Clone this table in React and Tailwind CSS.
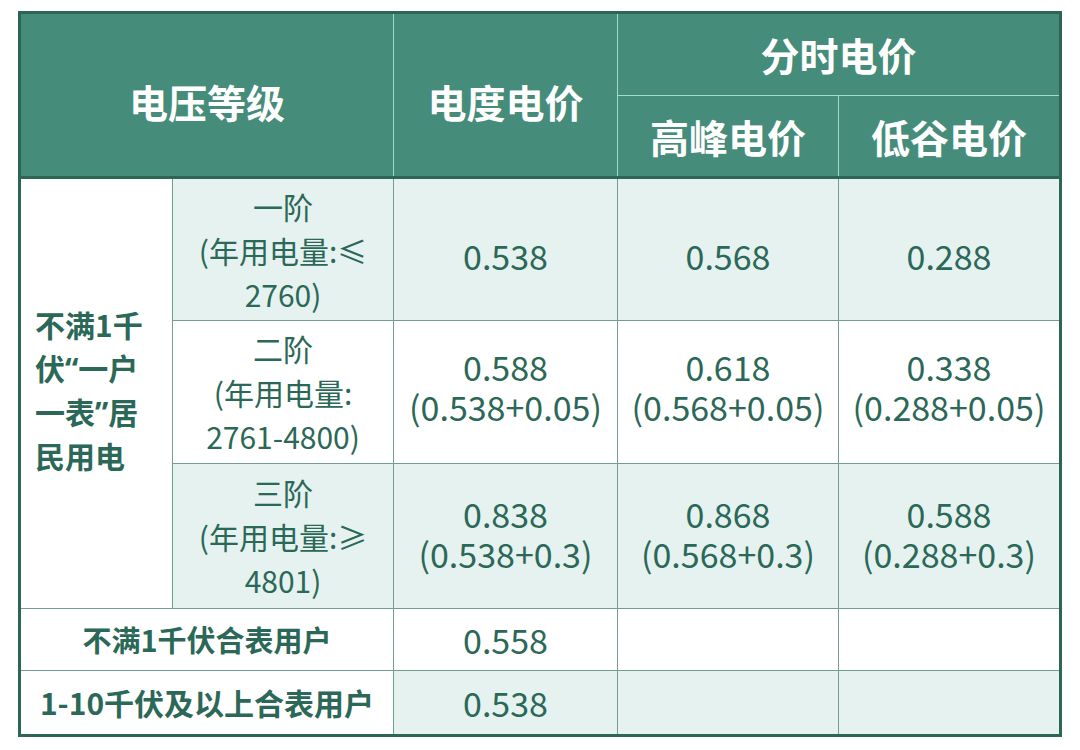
const font = { fontFamily: '"Noto Sans CJK SC", "Noto Sans", sans-serif' }
const latin = { fontFamily: '"Noto Sans", sans-serif' }

const tiers = [
  {
    name: '一阶',
    range: ['(年用电量:≤', '2760)'],
    bg: 'bg-[#e5f2f0]',
    pad: ' pt-[12px]',
    base: ['0.538'],
    peak: ['0.568'],
    valley: ['0.288'],
  },
  {
    name: '二阶',
    range: ['(年用电量:', '2761-4800)'],
    bg: 'bg-white',
    pad: ' pb-[10px]',
    base: ['0.588', '(0.538+0.05)'],
    peak: ['0.618', '(0.568+0.05)'],
    valley: ['0.338', '(0.288+0.05)'],
  },
  {
    name: '三阶',
    range: ['(年用电量:≥', '4801)'],
    bg: 'bg-[#e5f2f0]',
    pad: ' pb-[4px]',
    base: ['0.838', '(0.538+0.3)'],
    peak: ['0.868', '(0.568+0.3)'],
    valley: ['0.588', '(0.288+0.3)'],
  },
]

const headCell = 'border border-[#9fdccb] text-white font-bold text-[39px] text-center align-middle'
const bodyCell = 'border border-[#729d91] text-center align-middle'

function Lines({ items, className }) {
  return (
    <div className={className}>
      {items.map((t) => (
        <div key={t}>{t}</div>
      ))}
    </div>
  )
}

export default function App() {
  return (
    <div className="w-[1080px] h-[750px] bg-white pt-[11px] pl-[18px]" style={font}>
      <table className="table-fixed border-collapse border-[3px] border-[#2e6656] text-[#2b6857]">
        <colgroup>
          <col className="w-[153px]" />
          <col className="w-[221px]" />
          <col className="w-[224px]" />
          <col className="w-[221px]" />
          <col className="w-[222px]" />
        </colgroup>
        <thead className="bg-[#468c7b]">
          <tr className="h-[83px]">
            <th colSpan={2} rowSpan={2} className={headCell + ' pt-[12px] border-b-[3px] border-b-[#2e6656]'}>
              电压等级
            </th>
            <th rowSpan={2} className={headCell + ' pt-[12px] border-b-[3px] border-b-[#2e6656]'}>
              电度电价
            </th>
            <th colSpan={2} className={headCell}>
              分时电价
            </th>
          </tr>
          <tr className="h-[82px]">
            <th className={headCell + ' border-b-[3px] border-b-[#2e6656]'}>高峰电价</th>
            <th className={headCell + ' border-b-[3px] border-b-[#2e6656]'}>低谷电价</th>
          </tr>
        </thead>
        <tbody>
          {tiers.map((t, i) => (
            <tr key={t.name} className={i === 2 ? 'h-[145px]' : 'h-[143px]'}>
              {i === 0 && (
                <td rowSpan={3} className={bodyCell + ' bg-white font-bold text-[30px] leading-[43px] text-left pl-[14px] pb-[8px]'}>
                  不满1千
                  <br />
                  伏<span style={latin}>“</span>一户
                  <br />
                  一表<span style={latin}>”</span>居
                  <br />
                  民用电
                </td>
              )}
              <td className={bodyCell + ' ' + t.bg}>
                <Lines items={[t.name, ...t.range]} className="text-[30px] leading-[44px]" />
              </td>
              {[t.base, t.peak, t.valley].map((v, j) => (
                <td key={j} className={bodyCell + ' ' + t.bg + t.pad}>
                  <Lines items={v} className="text-[34px] leading-[40px]" />
                </td>
              ))}
            </tr>
          ))}
          <tr className="h-[62px]">
            <td colSpan={2} className={bodyCell + ' bg-white font-bold text-[29px]'}>
              不满1千伏合表用户
            </td>
            <td className={bodyCell + ' bg-white text-[34px]'}>0.558</td>
            <td className={bodyCell + ' bg-white'}></td>
            <td className={bodyCell + ' bg-white'}></td>
          </tr>
          <tr className="h-[65px]">
            <td colSpan={2} className={bodyCell + ' bg-white font-bold text-[30px]'}>
              1-10千伏及以上合表用户
            </td>
            <td className={bodyCell + ' bg-[#e5f2f0] text-[34px]'}>0.538</td>
            <td className={bodyCell + ' bg-[#e5f2f0]'}></td>
            <td className={bodyCell + ' bg-[#e5f2f0]'}></td>
          </tr>
        </tbody>
      </table>
    </div>
  )
}
